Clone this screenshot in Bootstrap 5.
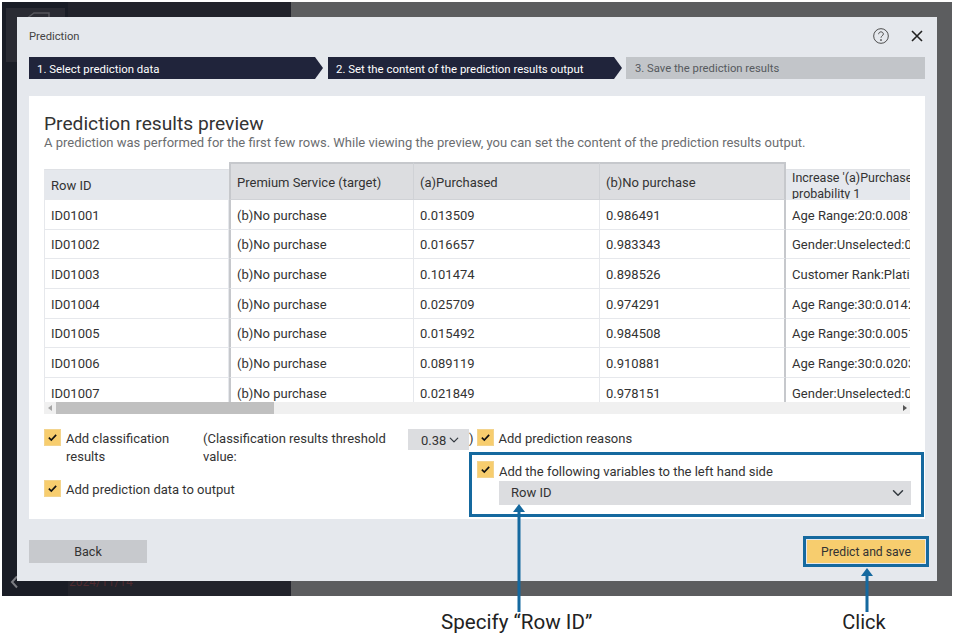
<!DOCTYPE html>
<html lang="en"><head><meta charset="utf-8"><title>Prediction</title>
<link href="https://cdn.jsdelivr.net/npm/bootstrap@5.3.0/dist/css/bootstrap.min.css" rel="stylesheet">
<style>
html,body{margin:0;background:#fff;height:635px;overflow:hidden}
body{font-family:Roboto,"Liberation Sans",sans-serif;color:#333;font-size:13px;position:relative}
.stage{margin:2px 0 0 2px;width:950px;height:594px;padding:15px;background:linear-gradient(90deg,#1a1d26 0,#1a1d26 66px,#22232b 66px,#22232b 289px,#5c5d5f 289px);position:relative}
.side-deco{position:absolute;left:4px;top:6px;width:59px;height:54px;background:#2a2b33}
.side-doc{position:absolute;left:23px;top:10px}
.side-date{position:absolute;left:67px;bottom:7px;font-size:12px;line-height:14px;color:#4f2a30}
.side-back{position:absolute;left:8px;bottom:7px}
.dlg{position:relative;width:920px;height:564px;background:#e5e8ed;padding:0 12px;display:flex;flex-direction:column}
.dlg-head{height:40px;display:flex;align-items:center;justify-content:space-between;font-size:11.2px;color:#444}
.dlg-icons{display:flex;align-items:center;gap:22px;padding-right:2px;padding-bottom:3px}
.steps{display:flex;height:22px;gap:5px;font-size:11.4px;line-height:24px}
.stp{padding-left:8px;color:#fff;background:#20243b;clip-path:polygon(0 0,calc(100% - 8px) 0,100% 50%,calc(100% - 8px) 100%,0 100%)}
.stp-a{width:294px}.stp-b{width:294px;margin-right:-1px}
.stp-c{flex:1;background:#c2c5c9;color:#565a5e;clip-path:none;padding-left:9px;font-size:11.25px}
.pane{margin-top:17px;height:423px;background:#fff;padding:15px 15px 0;position:relative}
.pane h1{font-size:19.2px;line-height:26px;margin:0;font-weight:400;color:#333}
.pane p{font-size:13px;line-height:14px;margin:-1px 0 1px;color:#6b6d70}
.tbl-wrap{margin-top:12px;width:866px;height:240px;overflow:hidden}
table.prev{table-layout:fixed;border-collapse:separate;border-spacing:0;width:1040px;margin:0;font-size:13px;color:#333}
table.prev td,table.prev th{padding:2px 6px 0;font-weight:400;white-space:nowrap;overflow:hidden;border:0;border-bottom:1.5px solid #e6e8ec;border-right:1.5px solid #e6e8ec;background:#fff;vertical-align:middle}
table.prev tr.top th.gap{border:0;background:transparent;padding:0;height:7px}
table.prev th{background:#e5e8ed}
table.prev th.rid{border-left:1.5px solid #e6e8ec;border-top:1.5px solid #dfe1e5;height:30px;padding-top:3px}
table.prev th.rid.last{padding:0 0 0 5px}
table.prev td{height:29.7px}
table.prev td.first{border-left:1.5px solid #e6e8ec}
table.prev th.hl{background:#dcdde0;border-top:2px solid #c6c8cc;border-right-color:#d0d2d6;border-bottom-color:#d0d2d6;padding-top:3px}
table.prev th.hl1,table.prev td.hl1{border-left:2px solid #c6c8cc}
table.prev th.hl3,table.prev td.hl3{border-right:2px solid #c6c8cc}
.hd2{height:29px;overflow:hidden;line-height:16px;font-size:12.5px}
.sbar{width:866px;height:12px;background:#f0f0f0;display:flex;align-items:center;position:relative}
.sbar i{display:block;width:0;height:0;border-style:solid}
.sb-l{margin-left:4px;border-width:3px 4px 3px 0;border-color:transparent #a5a5a5 transparent transparent}
.sb-t{margin-left:4px;width:218px;height:12px;background:#c0c0c0}
.sb-r{position:absolute;right:3px;border-width:3px 0 3px 4px;border-color:transparent transparent transparent #555}
.opts{display:flex;margin-top:15px;font-size:13px;line-height:18px;color:#333}
.form-check-input.tick{width:17px;height:17px;flex:none;margin:0;border-radius:0;border:1px solid #f3d48d;background-color:#f7cd6e;background-size:13px;opacity:1;background-image:url("data:image/svg+xml,%3csvg xmlns='http://www.w3.org/2000/svg' viewBox='0 0 16 16'%3e%3cpath fill='none' stroke='%23111' stroke-width='2' d='M3.5 8.2l3 3 6-6.4'/%3e%3c/svg%3e")}
.o-left{width:159px}
.o-lab{display:flex;gap:5px}
.o-lab span{padding-top:1px}
.o-wrap{max-width:135px}
.o-nowrap{white-space:nowrap}
.o-gap{margin-top:14px}
.o-mid{width:205px;padding:1px 20px 0 0}
.o-paren{padding-top:1px}
.o-tail{margin-left:3px}
.form-select.thr{width:61px;height:21px;padding:1px 0 0 13px;border:0;border-radius:0;background-color:#dcdde0;font-size:13px;line-height:22px;color:#333;background-position:right 10px center;background-size:10px;flex:none}
.form-select.var{height:24px;padding:0 0 0 12px;border:0;border-radius:0;background-color:#dcdde0;font-size:13px;line-height:24px;color:#333;background-position:right 7px center;background-size:12px;width:412px;margin:-1px 0 0 22px}
.hilite{position:absolute;left:440px;top:356px;width:455px;height:65px;border:3px solid #15699f;padding:6px 5px}
.foot{margin-top:21px;display:flex;justify-content:space-between}
.foot .btn{width:118px;height:23px;padding:0;border:0;border-radius:0;font-size:12.2px;line-height:24px;color:#333}
.foot .b-back{background:#c7c9cd;font-size:12.5px}
.foot .b-go{background:#f7cd6e;outline:3px solid #15699f;outline-offset:1px}
.arw{position:absolute;left:0;top:0;pointer-events:none}
.notes{position:absolute;top:608px;left:441px;width:500px;display:flex;font-size:20.6px;line-height:28px;color:#222}
.notes .n2{margin-left:250px;font-size:20px}
</style></head><body>
<div class="stage">
  <div class="side-deco"></div>
  <svg class="side-doc" width="26" height="8" viewBox="0 0 26 8" fill="none" stroke="#55565c" stroke-width="1.5"><path d="M1 8V7L9 1H24V8"/></svg>
  <svg class="side-back" width="9" height="14" viewBox="0 0 9 14" fill="none" stroke="#7b7c82" stroke-width="2"><path d="M7 1.500L2 7l5 5.500"/></svg>
  <div class="side-date">2024/11/14</div>
  <div class="dlg">
    <div class="dlg-head"><span>Prediction</span>
      <span class="dlg-icons">
        <svg width="16" height="16" viewBox="0 0 17 17" fill="none" stroke="#444" stroke-width="1"><circle cx="8.5" cy="8.500" r="7.800"/><path d="M6 6.600c0-1.500 1.100-2.500 2.500-2.500s2.500 1 2.500 2.300c0 1.800-2.500 2-2.500 3.900"/><circle cx="8.500" cy="12.800" r=".5" fill="#444"/></svg>
        <svg width="12" height="12" viewBox="0 0 12 12" stroke="#222" stroke-width="1.600"><path d="M1 1l10 10M11 1L1 11"/></svg>
      </span></div>
    <div class="steps">
      <div class="stp stp-a">1. Select prediction data</div>
      <div class="stp stp-b">2. Set the content of the prediction results output</div>
      <div class="stp stp-c">3. Save the prediction results</div>
    </div>
    <div class="pane">
      <h1>Prediction results preview</h1>
      <p>A prediction was performed for the first few rows. While viewing the preview, you can set the content of the prediction results output.</p>
      <div class="tbl-wrap">
        <table class="table prev">
          <colgroup><col style="width:185px"><col style="width:185px"><col style="width:186px"><col style="width:186px"><col style="width:298px"></colgroup>
          <tr class="top"><th class="gap"></th><th class="hl hl1" rowspan="2">Premium Service (target)</th><th class="hl" rowspan="2">(a)Purchased</th><th class="hl hl3" rowspan="2">(b)No purchase</th><th class="gap"></th></tr>
          <tr><th class="rid">Row ID</th><th class="rid last"><div class="hd2">Increase '(a)Purchased'<br>probability 1</div></th></tr>
          <tr><td class="first">ID01001</td><td class="hl1">(b)No purchase</td><td>0.013509</td><td class="hl3">0.986491</td><td>Age Range:20:0.008125</td></tr>
          <tr><td class="first">ID01002</td><td class="hl1">(b)No purchase</td><td>0.016657</td><td class="hl3">0.983343</td><td>Gender:Unselected:0.004</td></tr>
          <tr><td class="first">ID01003</td><td class="hl1">(b)No purchase</td><td>0.101474</td><td class="hl3">0.898526</td><td>Customer Rank:Platinum:0.05</td></tr>
          <tr><td class="first">ID01004</td><td class="hl1">(b)No purchase</td><td>0.025709</td><td class="hl3">0.974291</td><td>Age Range:30:0.01425</td></tr>
          <tr><td class="first">ID01005</td><td class="hl1">(b)No purchase</td><td>0.015492</td><td class="hl3">0.984508</td><td>Age Range:30:0.00512</td></tr>
          <tr><td class="first">ID01006</td><td class="hl1">(b)No purchase</td><td>0.089119</td><td class="hl3">0.910881</td><td>Age Range:30:0.02034</td></tr>
          <tr><td class="first">ID01007</td><td class="hl1">(b)No purchase</td><td>0.021849</td><td class="hl3">0.978151</td><td>Gender:Unselected:0.006</td></tr>
        </table>
      </div>
      <div class="sbar"><i class="sb-l"></i><span class="sb-t"></span><i class="sb-r"></i></div>
      <div class="opts">
        <div class="o-left">
          <label class="o-lab o-wrap"><input class="form-check-input tick" type="checkbox" checked><span>Add classification results</span></label>
          <label class="o-lab o-gap o-nowrap"><input class="form-check-input tick" type="checkbox" checked><span>Add prediction data to output</span></label>
        </div>
        <div class="o-mid">(Classification results threshold value:</div>
        <select class="form-select thr"><option>0.38</option></select><span class="o-paren">)</span>
        <label class="o-lab o-tail"><input class="form-check-input tick" type="checkbox" checked><span>Add prediction reasons</span></label>
      </div>
      <div class="hilite">
        <label class="o-lab"><input class="form-check-input tick" type="checkbox" checked><span>Add the following variables to the left hand side</span></label>
        <select class="form-select var"><option>Row ID</option></select>
      </div>
    </div>
    <div class="foot"><button class="btn b-back" type="button">Back</button><button class="btn b-go" type="button">Predict and save</button></div>
  </div>
</div>
<svg class="arw" width="954" height="635" fill="#15699f"><rect x="517.500" y="510" width="3" height="102"/><path d="M519 504l6 8h-12z"/><rect x="865.500" y="574" width="3" height="38"/><path d="M867 568l6 8h-12z"/></svg>
<div class="notes"><span>Specify “Row ID”</span><span class="n2">Click</span></div>
</body></html>
